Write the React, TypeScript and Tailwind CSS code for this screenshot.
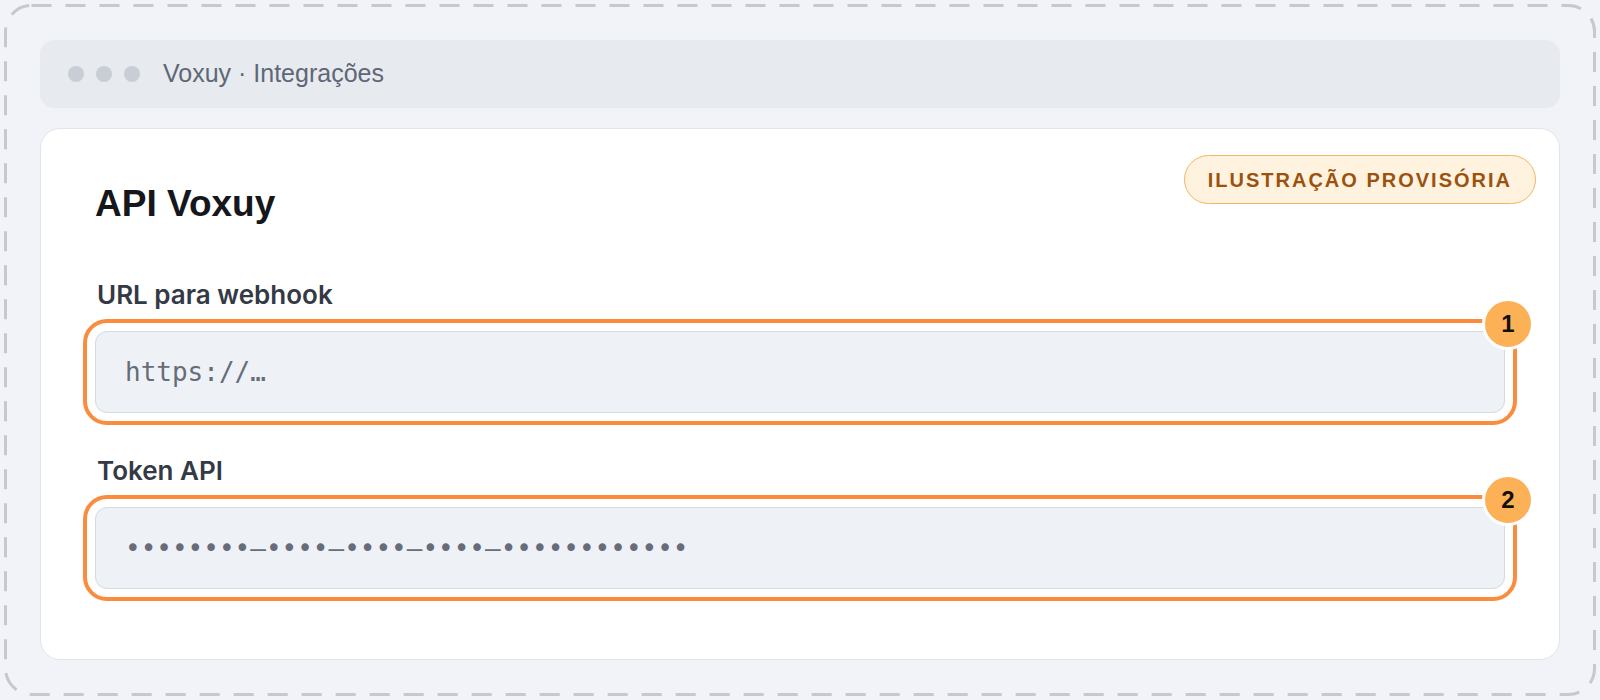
import React from "react";

interface FieldProps {
  label: string;
  value: string;
  step: number;
  first?: boolean;
}

function Field({ label, value, step, first }: FieldProps) {
  return (
    <div className={first ? "mt-[54px]" : "mt-[42px]"}>
      <label className="block pl-[2px] font-['Inter',sans-serif] text-[26px] font-semibold leading-[31px] text-[#333945]">
        {label}
      </label>
      <div className="relative mt-[21px]">
        {/* Input, highlighted with an orange ring */}
        <div className="flex h-[82px] items-center rounded-[12px] border-[1.5px] border-[#d4dae1] bg-[#eef2f6] pl-[29px] outline-4 outline-offset-[8px] outline-[#fb8c3e] font-['DejaVu_Sans_Mono',monospace] text-[26px] text-[#666c78]">
          {value}
        </div>
        {/* Step number */}
        <div className="absolute right-[-29px] top-[-33px] flex h-[52px] w-[52px] items-center justify-center rounded-full border-[3px] border-white bg-[#fdb157] text-[24px] font-bold text-[#111111]">
          {step}
        </div>
      </div>
    </div>
  );
}

export default function App() {
  return (
    <div className="relative h-[700px] w-[1600px] overflow-hidden bg-[#f1f3f8] p-10 font-['Liberation_Sans',Arial,sans-serif]">
      {/* Dashed frame */}
      <svg
        className="pointer-events-none absolute inset-0"
        width="1600"
        height="700"
        viewBox="0 0 1600 700"
      >
        <rect
          x="5.5"
          y="5.5"
          width="1589"
          height="689"
          rx="26"
          fill="none"
          stroke="#c3c8d1"
          strokeWidth="3"
          strokeDasharray="20 14"
        />
      </svg>

      {/* Window bar */}
      <div className="flex h-[68px] items-center rounded-[14px] bg-[#e7eaef] pl-7">
        <div className="flex gap-3">
          <span className="h-4 w-4 rounded-full bg-[#c9ced6]" />
          <span className="h-4 w-4 rounded-full bg-[#c9ced6]" />
          <span className="h-4 w-4 rounded-full bg-[#c9ced6]" />
        </div>
        <span className="ml-[23px] text-[25px] text-[#5f6776]">
          Voxuy · Integrações
        </span>
      </div>

      {/* Card */}
      <div className="relative mt-5 h-[532px] rounded-[20px] border border-[#e1e5ea] bg-white px-[54px] pt-[53px]">
        <span className="absolute right-[23px] top-[26px] flex h-[49px] items-center rounded-full border-[1.5px] border-[#f2b563] bg-[#fff3e0] px-[23px] text-[20px] font-bold tracking-[0.1em] text-[#9a520e]">
          ILUSTRAÇÃO PROVISÓRIA
        </span>

        <h1 className="text-[37px] font-bold leading-[43px] text-[#15171c]">
          API Voxuy
        </h1>

        <Field label="URL para webhook" value="https://…" step={1} first />
        <Field
          label="Token API"
          value="••••••••–••••–••••–••••–••••••••••••"
          step={2}
        />
      </div>
    </div>
  );
}
